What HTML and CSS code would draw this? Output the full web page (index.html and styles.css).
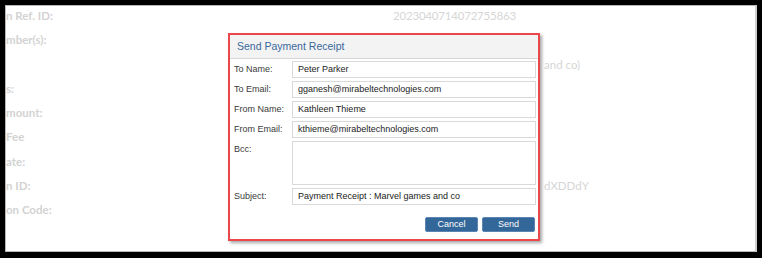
FILE: index.html
```html
<!DOCTYPE html>
<html lang="en">
<head>
    <meta charset="UTF-8">
    <title>Send Payment Receipt</title>
    <link rel="stylesheet" href="styles.css">
</head>
<body>

    <div class="frame">
        <!-- faded payment details behind the dialog -->
        <div class="details">
            <div class="detail-label">n Ref. ID:</div>
            <div class="detail-value">2023040714072755863</div>

            <div class="detail-label">mber(s):</div>
            <div class="detail-value"></div>

            <div class="detail-label"></div>
            <div class="detail-value"><span class="tail">and co)</span></div>

            <div class="detail-label">s:</div>
            <div class="detail-value"></div>

            <div class="detail-label">mount:</div>
            <div class="detail-value"></div>

            <div class="detail-label">Fee</div>
            <div class="detail-value"></div>

            <div class="detail-label">ate:</div>
            <div class="detail-value"></div>

            <div class="detail-label">n ID:</div>
            <div class="detail-value"><span class="tail">dXDDdY</span></div>

            <div class="detail-label">on Code:</div>
            <div class="detail-value"></div>
        </div>

        <div class="dialog">
            <div class="dialog-title">Send Payment Receipt</div>
            <div class="dialog-form">
                <label>To Name:</label>
                <div class="field">Peter Parker</div>

                <label>To Email:</label>
                <div class="field">gganesh@mirabeltechnologies.com</div>

                <label>From Name:</label>
                <div class="field">Kathleen Thieme</div>

                <label>From Email:</label>
                <div class="field">kthieme@mirabeltechnologies.com</div>

                <label>Bcc:</label>
                <div class="field field-area"></div>

                <label>Subject:</label>
                <div class="field">Payment Receipt : Marvel games and co</div>
            </div>
            <div class="dialog-buttons">
                <button class="btn">Cancel</button>
                <button class="btn">Send</button>
            </div>
        </div>
    </div>

</body>
</html>
```

FILE: styles.css
```css
body {
    margin: 0;
    background-color: #000;
}

/* White page area inside the black screenshot frame */
.frame {
    position: relative;
    box-sizing: border-box;
    margin: 5px 5px 0 5px;
    height: 247px;
    background-color: #fff;
    border: 1px solid #b8b8b8;
    border-right: 2px solid #cfcfcf;
    overflow: hidden;
}

/* Faded details */
.details {
    display: grid;
    grid-template-columns: 387px 1fr;
    margin-top: -2px;
    font-family: Lato, "Open Sans", sans-serif;
    font-size: 11.5px;
    line-height: 24.3px;
    color: #d6d6d6;
}

.detail-label {
    font-weight: 700;
    color: #d3d3d3;
    white-space: nowrap;
}

.detail-value {
    font-size: 11.5px;
    letter-spacing: -0.2px;
    white-space: nowrap;
}

.detail-value .tail {
    margin-left: 151px;
    letter-spacing: 0;
}

/* Dialog */
.dialog {
    position: absolute;
    left: 222px;
    top: 27px;
    width: 312px;
    height: 208px;
    box-sizing: border-box;
    background-color: #fff;
    border: 2px solid #e9474a;
    box-shadow: 2px 2px 3px rgba(0, 0, 0, 0.35);
    font-family: "Liberation Sans", Arial, sans-serif;
}

.dialog-title {
    height: 23px;
    padding-left: 7px;
    background-color: #f3f3f3;
    border-bottom: 1px solid #d6d6d6;
    color: #39689c;
    font-size: 10.5px;
    line-height: 22px;
}

.dialog-form {
    display: grid;
    grid-template-columns: 58px 1fr;
    row-gap: 3px;
    padding: 2px 2px 0 4px;
}

.dialog-form label {
    font-size: 9px;
    line-height: 17px;
    color: #3a3a3a;
}

.field {
    box-sizing: border-box;
    height: 17px;
    padding-left: 5px;
    border: 1px solid #d9d9d9;
    font-size: 9px;
    line-height: 15px;
    color: #222;
    white-space: nowrap;
}

.field-area {
    height: 44px;
}

.dialog-buttons {
    display: flex;
    justify-content: flex-end;
    gap: 4px;
    padding: 12px 3px 0 0;
}

.btn {
    width: 53px;
    height: 15px;
    padding: 0;
    border: 1px solid #5a85b3;
    border-radius: 2px;
    background-color: #336699;
    color: #fff;
    font-family: "Liberation Sans", Arial, sans-serif;
    font-size: 9px;
    line-height: 13px;
    cursor: pointer;
}
```
